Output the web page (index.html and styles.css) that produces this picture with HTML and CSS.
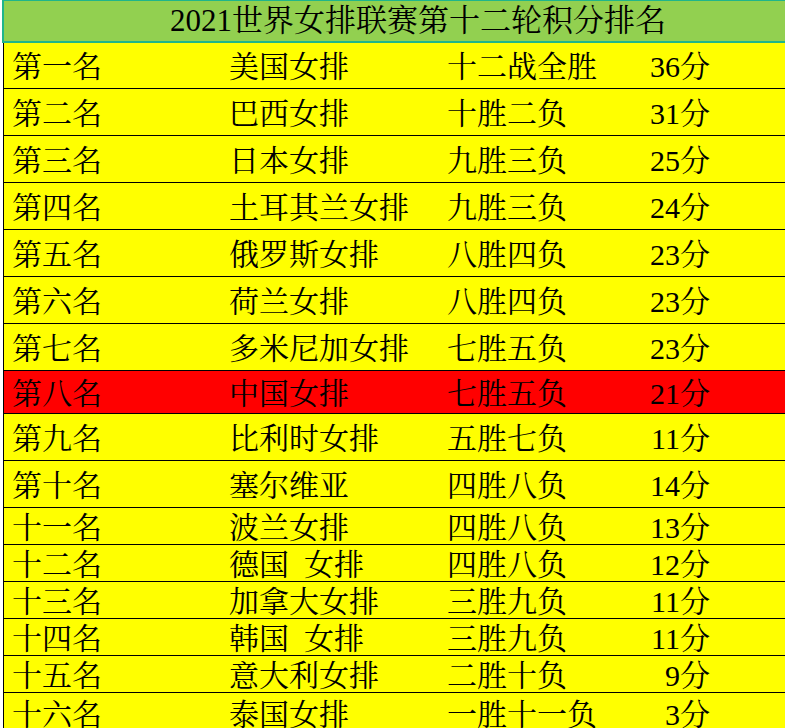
FILE: index.html
```html
<!DOCTYPE html>
<html lang="zh-CN">
<head>
<meta charset="utf-8">
<title>2021世界女排联赛第十二轮积分排名</title>
<link rel="stylesheet" href="styles.css">
</head>
<body>
<div class="sheet">
  <div class="title">2021世界女排联赛第十二轮积分排名</div>
  <div class="row first"><span class="c1">第一名</span><span class="c2">美国女排</span><span class="c3">十二战全胜</span><span class="c4">36分</span></div>
  <div class="row"><span class="c1">第二名</span><span class="c2">巴西女排</span><span class="c3">十胜二负</span><span class="c4">31分</span></div>
  <div class="row"><span class="c1">第三名</span><span class="c2">日本女排</span><span class="c3">九胜三负</span><span class="c4">25分</span></div>
  <div class="row"><span class="c1">第四名</span><span class="c2">土耳其兰女排</span><span class="c3">九胜三负</span><span class="c4">24分</span></div>
  <div class="row"><span class="c1">第五名</span><span class="c2">俄罗斯女排</span><span class="c3">八胜四负</span><span class="c4">23分</span></div>
  <div class="row"><span class="c1">第六名</span><span class="c2">荷兰女排</span><span class="c3">八胜四负</span><span class="c4">23分</span></div>
  <div class="row"><span class="c1">第七名</span><span class="c2">多米尼加女排</span><span class="c3">七胜五负</span><span class="c4">23分</span></div>
  <div class="row red"><span class="c1">第八名</span><span class="c2">中国女排</span><span class="c3">七胜五负</span><span class="c4">21分</span></div>
  <div class="row"><span class="c1">第九名</span><span class="c2">比利时女排</span><span class="c3">五胜七负</span><span class="c4">11分</span></div>
  <div class="row"><span class="c1">第十名</span><span class="c2">塞尔维亚</span><span class="c3">四胜八负</span><span class="c4">14分</span></div>
  <div class="row short"><span class="c1">十一名</span><span class="c2">波兰女排</span><span class="c3">四胜八负</span><span class="c4">13分</span></div>
  <div class="row short"><span class="c1">十二名</span><span class="c2">德国&ensp;女排</span><span class="c3">四胜八负</span><span class="c4">12分</span></div>
  <div class="row short"><span class="c1">十三名</span><span class="c2">加拿大女排</span><span class="c3">三胜九负</span><span class="c4">11分</span></div>
  <div class="row short"><span class="c1">十四名</span><span class="c2">韩国&ensp;女排</span><span class="c3">三胜九负</span><span class="c4">11分</span></div>
  <div class="row short"><span class="c1">十五名</span><span class="c2">意大利女排</span><span class="c3">二胜十负</span><span class="c4">9分</span></div>
  <div class="row short last"><span class="c1">十六名</span><span class="c2">泰国女排</span><span class="c3">一胜十一负</span><span class="c4">3分</span></div>
</div>
</body>
</html>
```
FILE: styles.css
```css
html, body {
  margin: 0;
  padding: 0;
  background: #ffffff;
}

body {
  width: 785px;
  height: 728px;
  overflow: hidden;
  font-family: "Liberation Serif", "Noto Serif CJK SC", "Noto Sans CJK SC", serif;
  font-size: 30px;
  color: #000000;
}

.sheet {
  display: flex;
  flex-direction: column;
  width: 785px;
}

.title {
  margin-left: 2px;
  height: 40px;
  line-height: 40px;
  font-size: 31px;
  background: #92d050;
  border-top: 1px solid #1fb58a;
  border-left: 2px solid #1fb58a;
  border-bottom: 2px solid #1fb58a;
  padding-left: 166px;
  white-space: nowrap;
}

.row {
  margin-left: 3px;
  display: grid;
  grid-template-columns: 217px 218px 170px 93px 1fr;
  align-items: center;
  height: 43px;
  padding-top: 3px;
  padding-left: 8px;
  background: #ffff00;
  border-left: 1px solid #000000;
  border-bottom: 1px solid #000000;
  white-space: nowrap;
  line-height: 1;
}

.row.first {
  height: 42px;
}

.row.red {
  height: 39px;
  background: #ff0000;
}

.row.short {
  height: 33px;
}

.row.last {
  height: 37px;
  border-bottom: none;
}

.c1, .c2, .c3 {
  text-align: left;
}

.c4 {
  text-align: right;
}
```
